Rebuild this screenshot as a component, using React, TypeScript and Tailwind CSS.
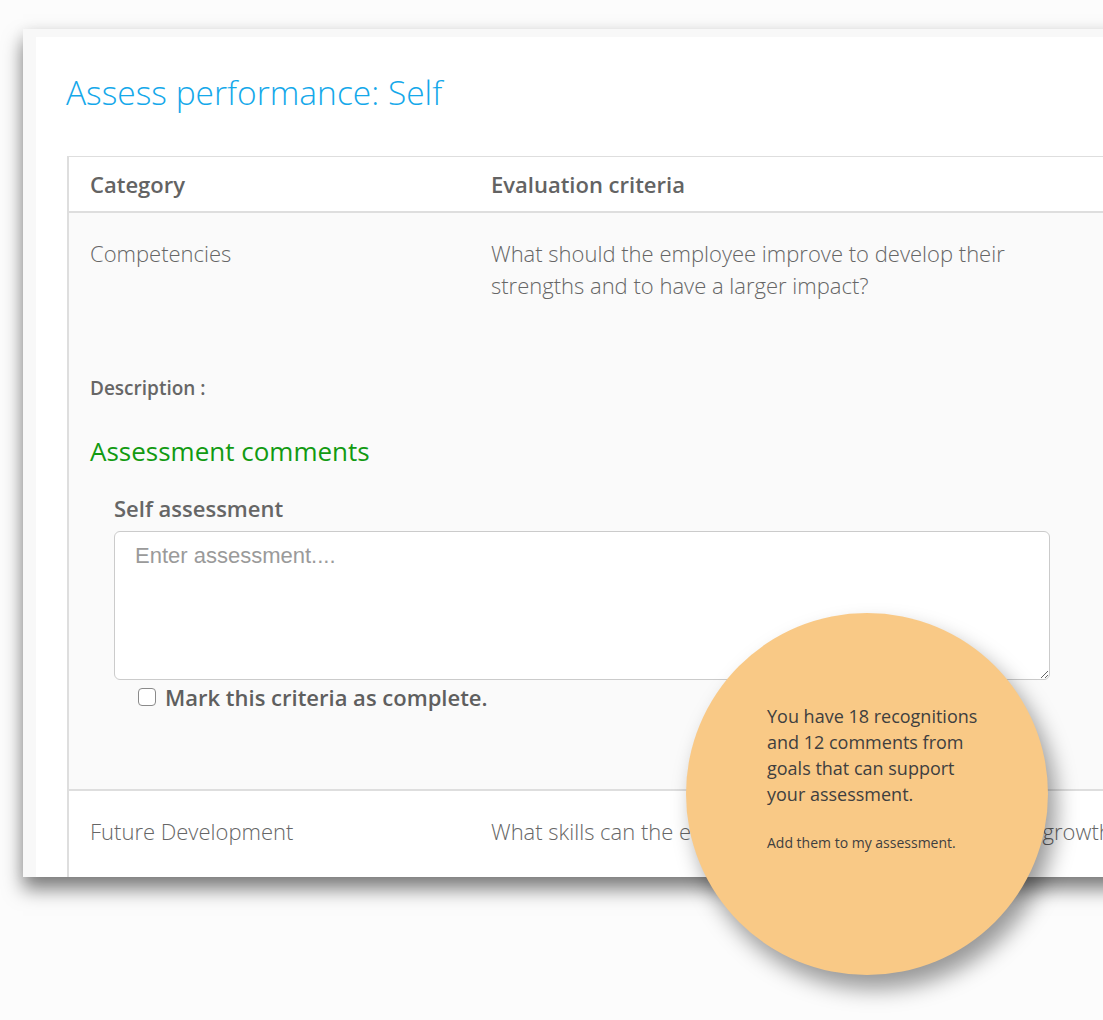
import React from "react";

export default function App() {
  const font = { fontFamily: '"Open Sans", "Noto Sans", sans-serif' };
  return (
    <div
      className="relative w-[1103px] h-[1020px] overflow-hidden bg-[#fcfcfc]"
      style={font}
    >
      <div className="pl-[23px] pt-[29px]">
        <div className="w-[1200px] bg-[#f8f8f8] pl-[13px] pt-[8px] shadow-[0_12px_18px_rgba(0,0,0,0.5),0_0_14px_rgba(0,0,0,0.06)]">
          <div className="bg-white pl-[30px] pt-[34px]">
            <h1 className="text-[33.5px] leading-[42px] font-light text-[#14a8ea]">
              Assess performance: Self
            </h1>
            <div className="mt-[43px] ml-[1px] border-l-2 border-t border-[#dedede]">
              {/* header */}
              <div className="flex h-[56px] items-center border-b-2 border-[#dedede] bg-white text-[22px] font-semibold text-[#636363]">
                <div className="w-[422px] pl-[21px]">Category</div>
                <div>Evaluation criteria</div>
              </div>
              {/* row 1 */}
              <div className="bg-[#fafafa] pt-[24px] pb-[78px] border-b-2 border-[#dedede] text-[#666]">
                <div className="flex text-[22px] leading-[32px] font-light">
                  <div className="w-[422px] pl-[21px]">Competencies</div>
                  <div className="w-[545px]">
                    What should the employee improve to develop their strengths and
                    to have a larger impact?
                  </div>
                </div>
                <div className="pl-[21px]">
                  <div className="mt-[75px] text-[19px] leading-[24px] font-semibold text-[#666]">
                    Description :
                  </div>
                  <div className="mt-[35px] text-[26px] leading-[32px] text-[#129a12]">
                    Assessment comments
                  </div>
                  <div className="pl-[24px]">
                    <div className="mt-[27px] text-[22px] leading-[28px] font-semibold text-[#666]">
                      Self assessment
                    </div>
                    <textarea
                      className="mt-[9px] block w-[936px] h-[149px] rounded-[6px] border border-[#cbcbcb] bg-white px-[20px] py-[10px] text-[22px] leading-[28px] text-[#555] placeholder:text-[#9a9a9a] outline-none"
                      style={{ fontFamily: '"Liberation Sans", Arial, sans-serif' }}
                      placeholder="Enter assessment...."
                    />
                    <div className="mt-[3px] flex items-center pl-[24px] h-[28px]">
                      <span className="inline-block w-[18px] h-[18px] rounded-[4px] border border-[#8a8a8a] bg-white" />
                      <span className="ml-[9px] text-[22px] leading-[28px] font-semibold text-[#5f5f5f]">
                        Mark this criteria as complete.
                      </span>
                    </div>
                  </div>
                </div>
              </div>
              {/* row 2 */}
              <div className="flex bg-white pt-[24px] pb-[30px] text-[22px] leading-[32px] font-light text-[#666] whitespace-nowrap">
                <div className="w-[422px] pl-[21px]">Future Development</div>
                <div>What skills can the employee develop to maximize their growth?</div>
              </div>
            </div>
          </div>
        </div>
      </div>

      {/* bubble */}
      <div className="absolute left-[686px] top-[613px] w-[362px] h-[362px] rounded-full bg-[#f9c986] shadow-[8px_14px_22px_rgba(0,0,0,0.4)] pl-[81px] pt-[90px] text-[#3f3f3f]">
        <p className="w-[222px] text-[18px] leading-[26px]">
          You have 18 recognitions and 12 comments from goals that can support your assessment.
        </p>
        <p className="mt-[27px] text-[14px] leading-[18px]">Add them to my assessment.</p>
      </div>
    </div>
  );
}
